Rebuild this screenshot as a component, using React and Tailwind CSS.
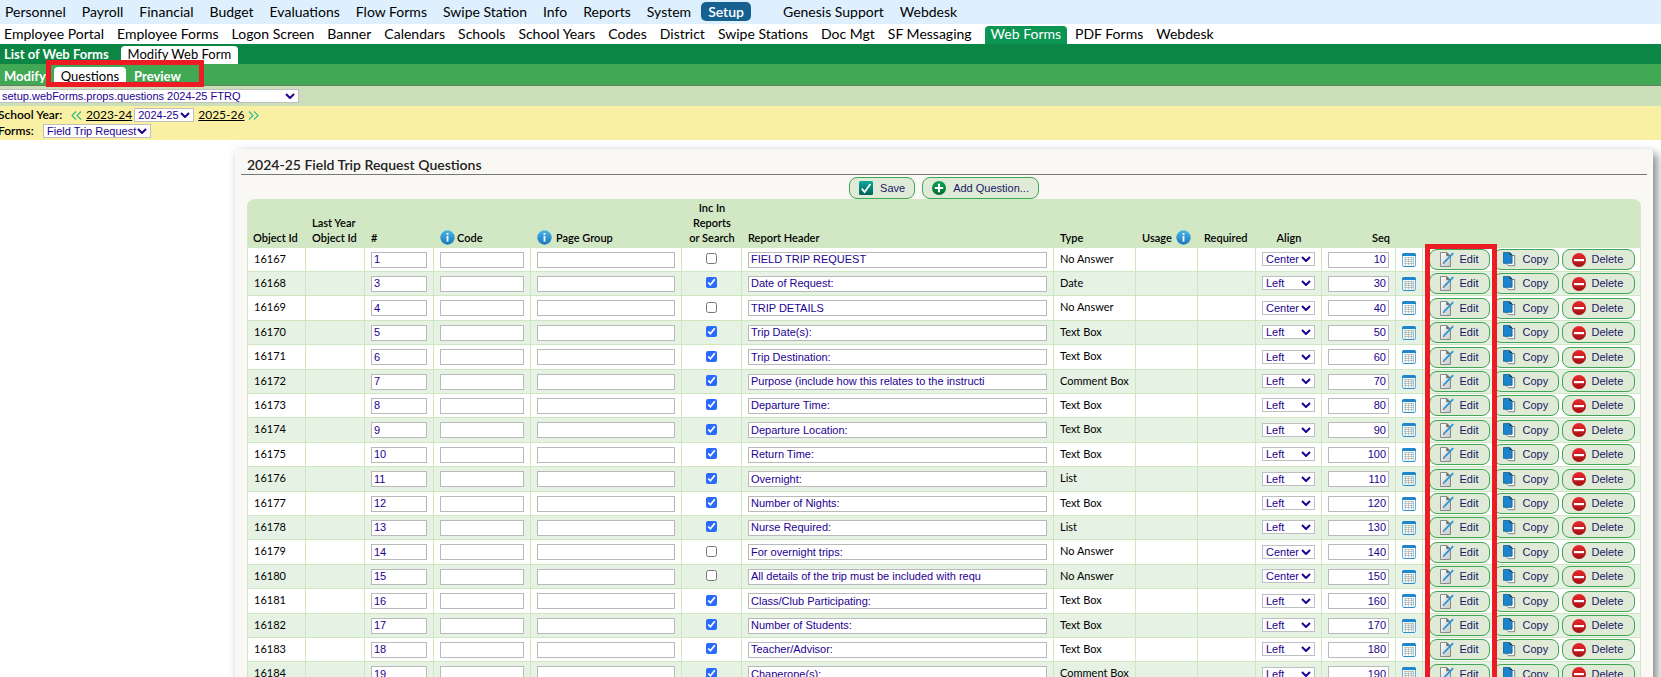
import React from "react";

const topNav = ["Personnel", "Payroll", "Financial", "Budget", "Evaluations", "Flow Forms", "Swipe Station", "Info", "Reports", "System"];
const subNav = ["Employee Portal", "Employee Forms", "Logon Screen", "Banner", "Calendars", "Schools", "School Years", "Codes", "District", "Swipe Stations", "Doc Mgt", "SF Messaging", "Web Forms", "PDF Forms", "Webdesk"];

const rows = [
  [16167, 1, false, "FIELD TRIP REQUEST", "No Answer", "Center", 10],
  [16168, 3, true, "Date of Request:", "Date", "Left", 30],
  [16169, 4, false, "TRIP DETAILS", "No Answer", "Center", 40],
  [16170, 5, true, "Trip Date(s):", "Text Box", "Left", 50],
  [16171, 6, true, "Trip Destination:", "Text Box", "Left", 60],
  [16172, 7, true, "Purpose (include how this relates to the instructi", "Comment Box", "Left", 70],
  [16173, 8, true, "Departure Time:", "Text Box", "Left", 80],
  [16174, 9, true, "Departure Location:", "Text Box", "Left", 90],
  [16175, 10, true, "Return Time:", "Text Box", "Left", 100],
  [16176, 11, true, "Overnight:", "List", "Left", 110],
  [16177, 12, true, "Number of Nights:", "Text Box", "Left", 120],
  [16178, 13, true, "Nurse Required:", "List", "Left", 130],
  [16179, 14, false, "For overnight trips:", "No Answer", "Center", 140],
  [16180, 15, false, "All details of the trip must be included with requ", "No Answer", "Center", 150],
  [16181, 16, true, "Class/Club Participating:", "Text Box", "Left", 160],
  [16182, 17, true, "Number of Students:", "Text Box", "Left", 170],
  [16183, 18, true, "Teacher/Advisor:", "Text Box", "Left", 180],
  [16184, 19, true, "Chaperone(s):", "Comment Box", "Left", 190],
];

function InfoIcon() {
  return (
    <svg viewBox="0 0 15 15" className="size-[15px] shrink-0" aria-hidden="true">
      <defs>
        <linearGradient id="infoFill" x1="0" y1="0" x2="0" y2="1">
          <stop offset="0" stopColor="#4bb4e6" />
          <stop offset="1" stopColor="#1878be" />
        </linearGradient>
      </defs>
      <circle cx="7.5" cy="7.5" r="7.2" fill="url(#infoFill)" />
      <rect x="6.6" y="3" width="1.8" height="1.8" fill="#fff" />
      <rect x="6.6" y="6" width="1.8" height="5.6" fill="#fff" />
    </svg>
  );
}

function SaveIcon() {
  return (
    <svg viewBox="0 0 14 14" className="size-3.5 shrink-0" aria-hidden="true">
      <defs>
        <linearGradient id="saveFill" x1="0" y1="0" x2="0" y2="1">
          <stop offset="0" stopColor="#0aa89a" />
          <stop offset="1" stopColor="#046257" />
        </linearGradient>
      </defs>
      <rect width="14" height="14" rx="1.5" fill="url(#saveFill)" />
      <path d="M2.8 7.6 5.6 11 11.4 3" fill="none" stroke="#fff" strokeWidth="1.8" />
    </svg>
  );
}

function AddIcon() {
  return (
    <svg viewBox="0 0 14 14" className="size-3.5 shrink-0" aria-hidden="true">
      <defs>
        <linearGradient id="addFill" x1="0" y1="0" x2="0" y2="1">
          <stop offset="0" stopColor="#0fa554" />
          <stop offset="1" stopColor="#056a33" />
        </linearGradient>
      </defs>
      <circle cx="7" cy="7" r="7" fill="url(#addFill)" />
      <path d="M7 2.8v8.4M2.8 7h8.4" stroke="#fff" strokeWidth="2" />
    </svg>
  );
}

function CalendarIcon() {
  return (
    <svg viewBox="0 0 14 14" className="mx-auto block size-3.5" aria-hidden="true">
      <rect x=".5" y=".5" width="13" height="13" rx="1.5" fill="#fff" fillOpacity=".5" stroke="#5bb1e4" />
      <path d="M0 3V2a2 2 0 0 1 2-2h10a2 2 0 0 1 2 2v1z" fill="#1f86cb" />
      <path d="M2 4.5h10M2 6.5h10M2 8.5h10M2 10.5h10M3.5 4v8.5M6.5 4v8.5M9.5 4v8.5M11.5 4v8.5" stroke="#a9b3b3" strokeWidth=".7" />
      <path d="M1.5 13.5h11" stroke="#2a8fd0" />
    </svg>
  );
}

function EditIcon() {
  return (
    <svg viewBox="0 0 15 15" className="size-[15px] shrink-0" aria-hidden="true">
      <defs>
        <linearGradient id="paperFill" x1="0" y1="0" x2="1" y2="1">
          <stop offset="0" stopColor="#fff" />
          <stop offset="1" stopColor="#c4c8c8" />
        </linearGradient>
      </defs>
      <path d="M1.5.5h6.3l3.7 3.5v10.5h-10z" fill="url(#paperFill)" stroke="#7b8282" strokeWidth=".9" />
      <path d="M7.6.6v3.2h3.4" fill="#666" stroke="#666" strokeWidth=".6" />
      <path d="M5.2 10.4 14.2 1.2" stroke="#2792d8" strokeWidth="1.7" />
      <path d="M3.8 12l.8-2 1.2 1.2z" fill="#444" />
    </svg>
  );
}

function CopyIcon() {
  return (
    <svg viewBox="0 0 13 15" className="h-[15px] w-[13px] shrink-0" aria-hidden="true">
      <path d="M3.5 3.5h8.2v10.2H5.5l-2-2z" fill="#fff" stroke="#6e7676" strokeWidth=".9" />
      <path d="M.5.5h6.2l2.4 2.4v8.4H.5z" fill="#1b84cc" stroke="#155e92" strokeWidth=".8" />
      <path d="M6.6.3v2.8h2.8z" fill="#1c3340" />
    </svg>
  );
}

function DeleteIcon() {
  return (
    <svg viewBox="0 0 14 14" className="size-3.5 shrink-0" aria-hidden="true">
      <defs>
        <linearGradient id="deleteFill" x1="0" y1="0" x2="0" y2="1">
          <stop offset="0" stopColor="#ea2a2e" />
          <stop offset="1" stopColor="#a30f14" />
        </linearGradient>
      </defs>
      <circle cx="7" cy="7" r="7" fill="url(#deleteFill)" />
      <rect x="2" y="6" width="10" height="2.2" fill="#fff" />
    </svg>
  );
}

const buttonBase = "flex items-center rounded-lg border border-[#3fa653] bg-[#dfebd7] font-['Liberation_Sans',sans-serif] text-[11px] text-[#1c1666]";
const inputBase = "block h-4 w-full border border-[#b9b9b9] bg-white px-0.5 font-['Liberation_Sans',sans-serif] text-[11px] text-[#1e0092]";
const cell = "border-r border-b border-[#cfe6c0] p-0";
const head = "p-0 px-1.5 pb-[3px] align-bottom font-semibold";

function Select({ className, options, ...props }) {
  return (
    <span className={"relative block h-3.5 shrink-0 " + className}>
      <select
        {...props}
        className="block h-full w-full appearance-none border border-[#bfbfc2] bg-white pl-[3px] font-['Liberation_Sans',sans-serif] text-[11px] leading-3 text-[#1e0092]"
      >
        {options.map((o) => (
          <option key={o}>{o}</option>
        ))}
      </select>
      <svg viewBox="0 0 10 6" className="pointer-events-none absolute top-1 right-1 h-1.5 w-2.5" aria-hidden="true">
        <path d="M1 1l4 4 4-4" fill="none" stroke="#1e0092" strokeWidth="2" />
      </svg>
    </span>
  );
}

export default function App() {
  return (
    <div className="flex h-screen flex-col overflow-hidden bg-white font-[Lato,sans-serif] text-[13px] text-black">
      <nav aria-label="Modules" className="flex h-6 shrink-0 items-center gap-4 bg-[#def0fd] pb-0.5 pl-[5px] text-[14px] whitespace-nowrap">
        {topNav.map((t) => (
          <a key={t} href="#">{t}</a>
        ))}
        <a href="#" className="-ml-1.5 rounded-[5px] bg-[#16618f] px-[7px] leading-[19px] font-semibold text-white">Setup</a>
        <a href="#" className="ml-4">Genesis Support</a>
        <a href="#">Webdesk</a>
      </nav>
      <nav aria-label="Setup" className="flex h-5 shrink-0 items-end pt-0.5 text-[14px] whitespace-nowrap">
        {subNav.map((t) =>
          t === "Web Forms" ? (
            <a key={t} href="#" className="mx-1 rounded-t-[4px] bg-[#0b9553] px-1.5 pb-0.5 leading-4 text-white">{t}</a>
          ) : (
            <a key={t} href="#" className="pr-[9px] pb-0.5 pl-1 leading-4">{t}</a>
          )
        )}
      </nav>
      <nav aria-label="Web forms" className="flex h-5 shrink-0 items-end bg-[#0b8644] pl-1">
        <a href="#" className="pr-3 pb-px leading-[17px] font-bold text-white">List of Web Forms</a>
        <a href="#" className="rounded-t-[4px] bg-white px-[7px] pb-px leading-[17px]">Modify Web Form</a>
      </nav>
      <nav aria-label="Form" className="relative flex h-[22px] shrink-0 items-end border-b border-[#6b7d66] bg-[#41a854] pl-1">
        <a href="#" className="pr-2 leading-[18px] font-bold text-white">Modify</a>
        <a href="#" className="rounded-t-[4px] bg-white px-[7px] leading-[18px]">Questions</a>
        <a href="#" className="px-2 leading-[18px] font-bold text-white">Preview</a>
        <div className="pointer-events-none absolute top-[-4px] left-[46px] h-[27px] w-[158px] border-[5px] border-[#ed1c24]" />
      </nav>
      <div className="flex h-5 shrink-0 items-center bg-[#cbdfb9]">
        <Select aria-label="Screen" className="-ml-0.5 w-[301px]" options={["setup.webForms.props.questions 2024-25 FTRQ"]} />
      </div>
      <div className="h-[34px] shrink-0 bg-[#faf0a3] pt-px text-[12px]">
        <div className="-ml-0.5 flex h-4 items-center">
          <label htmlFor="year" className="w-[73px] font-semibold">School Year:</label>
          <svg viewBox="0 0 11 9" className="mr-1 h-[9px] w-[11px]" aria-hidden="true">
            <path d="M5 .5 1 4.5l4 4M10 .5 6 4.5l4 4" fill="none" stroke="#35b98a" strokeWidth="1.2" />
          </svg>
          <a href="#" className="underline">2023-24</a>
          <Select id="year" className="mr-1 ml-0.5 w-[60px]" options={["2024-25"]} />
          <a href="#" className="underline">2025-26</a>
          <svg viewBox="0 0 11 9" className="ml-1 h-[9px] w-[11px]" aria-hidden="true">
            <path d="M1 .5l4 4-4 4M6 .5l4 4-4 4" fill="none" stroke="#35b98a" strokeWidth="1.2" />
          </svg>
        </div>
        <div className="-ml-0.5 flex h-4 items-center">
          <label htmlFor="form" className="w-[45px] font-semibold">Forms:</label>
          <Select id="form" className="w-[108px]" options={["Field Trip Request"]} />
        </div>
      </div>

      <main className="mt-[9px] mr-2 ml-[235px] flex-1 rounded-t-[4px] bg-[#f9f8f4] shadow-[5px_5px_8px_rgba(0,0,0,0.4),0_0_8px_rgba(60,70,110,0.12)]">
        <h1 className="mx-1.5 h-[26px] border-b border-[#777] pl-1.5 text-[14px] leading-[31px] font-semibold text-[#222]">2024-25 Field Trip Request Questions</h1>
        <div className="flex justify-center gap-[7px] pt-0.5">
          <button type="button" className={buttonBase + " h-[22px] gap-[7px] px-[9px]"}><SaveIcon />Save</button>
          <button type="button" className={buttonBase + " h-[22px] gap-[7px] px-[9px]"}><AddIcon />Add Question...</button>
        </div>
        <div className="relative px-3">
          <table className="w-full table-fixed border-separate border-spacing-0 text-[11px]">
            <colgroup>
              <col className="w-[59px]" />
              <col className="w-[59px]" />
              <col className="w-[69px]" />
              <col className="w-[97px]" />
              <col className="w-[151px]" />
              <col className="w-[60px]" />
              <col />
              <col className="w-[82px]" />
              <col className="w-[62px]" />
              <col className="w-[58px]" />
              <col className="w-[66px]" />
              <col className="w-[74px]" />
              <col className="w-[27px]" />
              <col className="w-[218px]" />
            </colgroup>
            <thead>
              <tr className="h-[49px] bg-[#d2e8c5] text-left leading-[15px] whitespace-nowrap">
                <th className={head + " rounded-tl-lg"}>Object Id</th>
                <th className={head}>Last Year<br />Object Id</th>
                <th className={head}>#</th>
                <th className={head}><span className="flex items-center gap-0.5"><InfoIcon />Code</span></th>
                <th className={head}><span className="flex items-center gap-1"><InfoIcon />Page Group</span></th>
                <th className="p-0 pb-[3px] text-center align-bottom font-semibold">Inc In<br />Reports<br />or Search</th>
                <th className={head}>Report Header</th>
                <th className={head}>Type</th>
                <th className={head}><span className="flex items-center gap-1">Usage<InfoIcon /></span></th>
                <th className={head}>Required</th>
                <th className={head + " text-center"}>Align</th>
                <th className={head + " text-right"}>Seq</th>
                <th className={head} />
                <th className={head + " rounded-tr-lg"} />
              </tr>
            </thead>
            <tbody>
              {rows.map(([id, num, inc, header, type, align, seq]) => (
                <tr key={id} className="h-6 bg-white even:bg-[#e6f2e4] nth-[5n]:h-[25px] nth-[5n+3]:h-[25px]">
                  <td className={cell + " border-l pb-px pl-1.5"}>{id}</td>
                  <td className={cell} />
                  <td className={cell + " px-1.5"}><input aria-label={"Number " + id} defaultValue={num} className={inputBase} /></td>
                  <td className={cell + " px-1.5"}><input aria-label={"Code " + id} className={inputBase} /></td>
                  <td className={cell + " px-1.5"}><input aria-label={"Page group " + id} className={inputBase} /></td>
                  <td className={cell + " pb-0.5"}><input type="checkbox" aria-label={"Include " + id} defaultChecked={inc} className="mx-auto block size-[11px] accent-[#2a6bff]" /></td>
                  <td className={cell + " px-1.5"}><input aria-label={"Report header " + id} defaultValue={header} className={inputBase} /></td>
                  <td className={cell + " pb-px pl-1.5 whitespace-nowrap"}>{type}</td>
                  <td className={cell} />
                  <td className={cell} />
                  <td className={cell + " px-1.5 pb-px"}>
                    <Select aria-label={"Align " + id} defaultValue={align} options={["Left", "Center"]} className="w-full" />
                  </td>
                  <td className={cell + " px-1.5"}><input aria-label={"Sequence " + id} defaultValue={seq} className={inputBase + " text-right"} /></td>
                  <td className={cell}><CalendarIcon /></td>
                  <td className={cell}>
                    <div className="flex justify-center gap-[3px]">
                      <button type="button" className={buttonBase + " h-[21px] w-[61px] gap-1.5 pl-[9px]"}><EditIcon />Edit</button>
                      <button type="button" className={buttonBase + " h-[21px] w-[66px] gap-[7px] pl-[9px]"}><CopyIcon />Copy</button>
                      <button type="button" className={buttonBase + " h-[21px] w-[73px] gap-1.5 pl-[9px]"}><DeleteIcon />Delete</button>
                    </div>
                  </td>
                </tr>
              ))}
            </tbody>
          </table>
          <div className="pointer-events-none absolute top-[45px] right-[156px] bottom-0 w-[72px] border-[5px] border-[#ed1c24]" />
        </div>
      </main>
    </div>
  );
}
